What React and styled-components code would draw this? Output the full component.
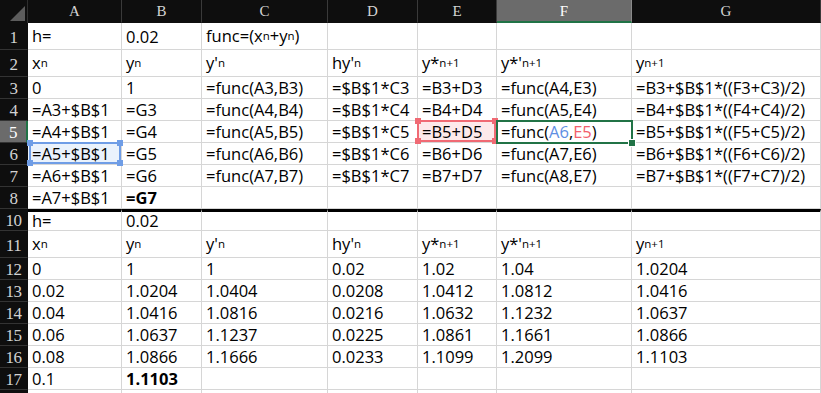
import React from 'react';
import styled, { createGlobalStyle, css } from 'styled-components';

const GlobalStyle = createGlobalStyle`
  html, body { margin: 0; padding: 0; background: #fff; overflow: hidden; }
  body { width: 821px; height: 393px; }
`;

const GREEN = '#217346';
const GRID = '#d6d6d6';
const HEAD_BG = '#0e0e0e';
const HEAD_SEL = '#6b6b6b';

const Sheet = styled.div`
  display: grid;
  grid-template-columns: 28px 94px 80px 126px 90px 79px 135px 1fr;
  grid-template-rows: 23px 27px 27px repeat(6, 22px) 22px 27px repeat(7, 22px);
  width: 821px;
  height: 393px;
  overflow: hidden;
  font-family: "Open Sans", "Noto Sans", sans-serif;
  font-size: 16.5px;
  color: #000;
`;

const Corner = styled.div`
  box-sizing: border-box;
  background: ${HEAD_BG};
  border-right: 1px solid #2e2e2e;
  display: flex;
  align-items: flex-end;
  justify-content: flex-end;
  padding: 0 2px 2px 0;
`;

const ColHeader = styled.div`
  box-sizing: border-box;
  background: ${p => (p.$selected ? HEAD_SEL : HEAD_BG)};
  color: ${p => (p.$selected ? '#ffffff' : '#d4d4d4')};
  border-right: 1px solid ${p => (p.$selected ? '#8a8a8a' : '#3a3a3a')};
  border-bottom: ${p => (p.$selected ? `2px solid ${GREEN}` : '1px solid #0e0e0e')};
  display: flex;
  align-items: center;
  justify-content: center;
  padding-top: 1px;
  font-family: "Liberation Serif", "DejaVu Serif", serif;
  font-size: 15px;
`;

const RowHeader = styled.div`
  box-sizing: border-box;
  background: ${p => (p.$selected ? HEAD_SEL : HEAD_BG)};
  color: ${p => (p.$selected ? '#ffffff' : '#d2d2d2')};
  border-bottom: 1px solid #333;
  border-right: ${p => (p.$selected ? `2px solid ${GREEN}` : '1px solid #0e0e0e')};
  display: flex;
  align-items: center;
  justify-content: center;
  padding-top: 3px;
  font-family: "Liberation Serif", "DejaVu Serif", serif;
  font-size: 17px;
  letter-spacing: -0.5px;
`;

const Cell = styled.div`
  box-sizing: border-box;
  position: ${p => (p.$rel ? 'relative' : 'static')};
  display: flex;
  align-items: ${p => (p.$bottom ? 'flex-end' : 'center')};
  padding: 0 4px ${p => (p.$bottom ? '1px' : '0')} 4px;
  border-right: 1px solid ${GRID};
  border-bottom: 1px solid ${GRID};
  ${p => p.$thickTop && css`border-top: 3px solid #000;`}
  background: ${p => p.$fill || '#fff'};
  font-weight: ${p => (p.$bold ? 700 : 400)};
  line-height: 22px;
  white-space: nowrap;
`;

const Sub = styled.span`
  font-size: 11.5px;
  line-height: 1;
  vertical-align: -4px;
`;

const Ref = styled.span`
  color: ${p => p.$color};
`;

const SelBox = styled.div`
  position: absolute;
  z-index: 2;
  pointer-events: none;
  top: -1px;
  left: ${p => p.$left ?? '-1px'};
  right: ${p => p.$right ?? '0px'};
  bottom: ${p => p.$bottom ?? '0px'};
  border: 2px solid ${p => p.$color};
`;

const Handle = styled.span`
  position: absolute;
  width: 6px;
  height: 6px;
  background: ${p => p.$color};
  ${p => p.$top && css`top: -4px;`}
  ${p => p.$bottomPos && css`bottom: -4px;`}
  ${p => p.$leftPos && css`left: -4px;`}
  ${p => p.$rightPos && css`right: -4px;`}
  ${p => p.$outlined && css`box-shadow: 0 0 0 1px #fff;`}
`;

const CornerIcon = () => (
  <svg width="15" height="15" viewBox="0 0 15 15">
    <polygon points="0,15 15,15 15,0" fill="#5c5c5c" />
  </svg>
);

const BLUE = '#6f9de6';
const PINK = '#f06a74';

const CornerHandles = ({ color }) => (
  <>
    <Handle $color={color} $top $leftPos />
    <Handle $color={color} $top $rightPos />
    <Handle $color={color} $bottomPos $leftPos />
    <Handle $color={color} $bottomPos $rightPos />
  </>
);

const labelRow = [
  <>x<Sub>n</Sub></>,
  <>y<Sub>n</Sub></>,
  <>y'<Sub>n</Sub></>,
  <>hy'<Sub>n</Sub></>,
  <>y*<Sub>n+1</Sub></>,
  <>y*'<Sub>n+1</Sub></>,
  <>y<Sub>n+1</Sub></>,
];

const f = n => [
  `=func(A${n},B${n})`,
  `=$B$1*C${n}`,
  `=B${n}+D${n}`,
  `=func(A${n + 1},E${n})`,
  `=B${n}+$B$1*((F${n}+C${n})/2)`,
];

const rows = [
  { num: 1, cells: ['h=', { v: '0.02', bottom: true }, <>func=(x<Sub>n</Sub>+y<Sub>n</Sub>)</>, '', '', '', ''] },
  { num: 2, cells: labelRow },
  { num: 3, cells: ['0', '1', ...f(3)] },
  { num: 4, cells: ['=A3+$B$1', '=G3', ...f(4)] },
  {
    num: 5,
    selected: true,
    cells: [
      '=A4+$B$1',
      '=G4',
      '=func(A5,B5)',
      '=$B$1*C5',
      { v: '=B5+D5', sel: 'pink' },
      { v: <>=func(<Ref $color="#5f8fe3">A6</Ref>,<Ref $color="#f2606c">E5</Ref>)</>, sel: 'green' },
      '=B5+$B$1*((F5+C5)/2)',
    ],
  },
  { num: 6, cells: [{ v: '=A5+$B$1', sel: 'blue' }, '=G5', ...f(6)] },
  { num: 7, cells: ['=A6+$B$1', '=G6', ...f(7)] },
  { num: 8, cells: ['=A7+$B$1', { v: '=G7', bold: true }, '', '', '', '', ''] },
  { num: 10, thickTop: true, cells: ['h=', '0.02', '', '', '', '', ''] },
  { num: 11, cells: labelRow },
  { num: 12, cells: ['0', '1', '1', '0.02', '1.02', '1.04', '1.0204'] },
  { num: 13, cells: ['0.02', '1.0204', '1.0404', '0.0208', '1.0412', '1.0812', '1.0416'] },
  { num: 14, cells: ['0.04', '1.0416', '1.0816', '0.0216', '1.0632', '1.1232', '1.0637'] },
  { num: 15, cells: ['0.06', '1.0637', '1.1237', '0.0225', '1.0861', '1.1661', '1.0866'] },
  { num: 16, cells: ['0.08', '1.0866', '1.1666', '0.0233', '1.1099', '1.2099', '1.1103'] },
  { num: 17, cells: ['0.1', { v: '1.1103', bold: true }, '', '', '', '', ''] },
  { num: 18, hideNum: true, cells: ['', '', '', '', '', '', ''] },
];

const COLS = ['A', 'B', 'C', 'D', 'E', 'F', 'G'];

const renderCell = (c, key, row) => {
  const obj = c && typeof c === 'object' && !React.isValidElement(c) ? c : { v: c };
  const fill =
    obj.sel === 'pink' ? '#fde9ea' : obj.sel === 'blue' ? '#eaf2fc' : undefined;
  return (
    <Cell
      key={key}
      $rel={!!obj.sel}
      $fill={fill}
      $bold={obj.bold}
      $bottom={obj.bottom}
      $thickTop={row.thickTop}
    >
      {obj.v}
      {obj.sel === 'pink' && (
        <SelBox $color={PINK}>
          <CornerHandles color={PINK} />
        </SelBox>
      )}
      {obj.sel === 'blue' && (
        <SelBox $color={BLUE} $left="1px">
          <CornerHandles color={BLUE} />
        </SelBox>
      )}
      {obj.sel === 'green' && (
        <SelBox $color={GREEN} $right="-2px" $bottom="-2px">
          <Handle $color={GREEN} $bottomPos $rightPos $outlined />
        </SelBox>
      )}
    </Cell>
  );
};

export default function App() {
  return (
    <>
      <GlobalStyle />
      <Sheet>
        <Corner>
          <CornerIcon />
        </Corner>
        {COLS.map(c => (
          <ColHeader key={c} $selected={c === 'F'}>
            {c}
          </ColHeader>
        ))}
        {rows.map(row => (
          <React.Fragment key={row.num}>
            <RowHeader $selected={row.selected}>{row.hideNum ? '' : String(row.num)}</RowHeader>
            {row.cells.map((c, i) => renderCell(c, `${row.num}-${i}`, row))}
          </React.Fragment>
        ))}
      </Sheet>
    </>
  );
}
